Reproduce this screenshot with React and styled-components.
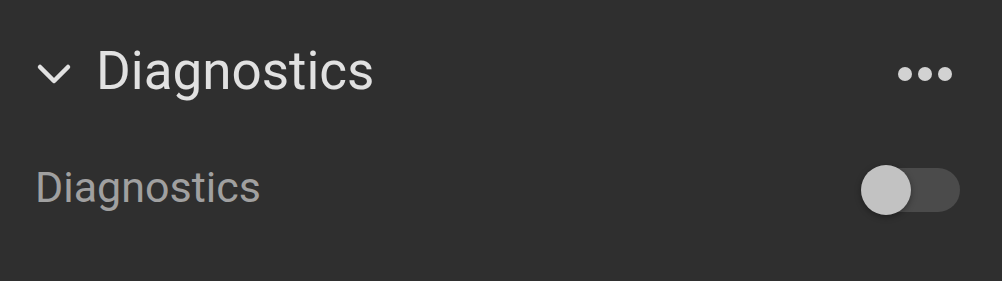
import React from "react";
import styled, { createGlobalStyle } from "styled-components";

const GlobalStyle = createGlobalStyle`
  html, body {
    margin: 0;
    padding: 0;
    background: #2f2f2f;
  }
  body {
    font-family: Roboto, "Noto Sans", sans-serif;
  }
`;

const Card = styled.div`
  width: 1002px;
  height: 281px;
  box-sizing: border-box;
  padding: 20px 40px 0 35px;
  background: #2f2f2f;
`;

const Header = styled.div`
  display: flex;
  align-items: center;
  height: 108px;
`;

const Chevron = styled.svg`
  width: 36px;
  height: 22px;
  margin-left: 1px;
  flex: none;
`;

const Title = styled.div`
  flex: 1;
  margin-left: 24px;
  font-size: 53px;
  color: #e1e1e1;
  line-height: 1;
  padding-bottom: 6px;
`;

const MoreButton = styled.div`
  display: flex;
  gap: 6px;
  margin-right: 10px;
`;

const Dot = styled.span`
  width: 14px;
  height: 14px;
  border-radius: 50%;
  background: #d2d2d2;
`;

const Row = styled.div`
  display: flex;
  align-items: center;
  justify-content: space-between;
  height: 80px;
  margin-top: 22px;
`;

const Label = styled.div`
  font-size: 43px;
  color: #a0a0a0;
  line-height: 1;
  padding-bottom: 6px;
`;

const Switch = styled.div`
  position: relative;
  width: 99px;
  height: 44px;
  margin-right: 2px;
  border-radius: 22px;
  background: #4b4b4b;
`;

const Thumb = styled.div`
  position: absolute;
  left: 0;
  top: -3px;
  width: 50px;
  height: 50px;
  border-radius: 50%;
  background: #c2c2c2;
  box-shadow: 0 2px 6px rgba(0, 0, 0, 0.35);
`;

export default function App() {
  return (
    <>
      <GlobalStyle />
      <Card>
        <Header>
          <Chevron viewBox="0 0 36 22">
            <path
              d="M4 4 L18 18 L32 4"
              fill="none"
              stroke="#e1e1e1"
              strokeWidth="4.5"
              strokeLinecap="round"
              strokeLinejoin="round"
            />
          </Chevron>
          <Title>Diagnostics</Title>
          <MoreButton>
            <Dot />
            <Dot />
            <Dot />
          </MoreButton>
        </Header>
        <Row>
          <Label>Diagnostics</Label>
          <Switch>
            <Thumb />
          </Switch>
        </Row>
      </Card>
    </>
  );
}
